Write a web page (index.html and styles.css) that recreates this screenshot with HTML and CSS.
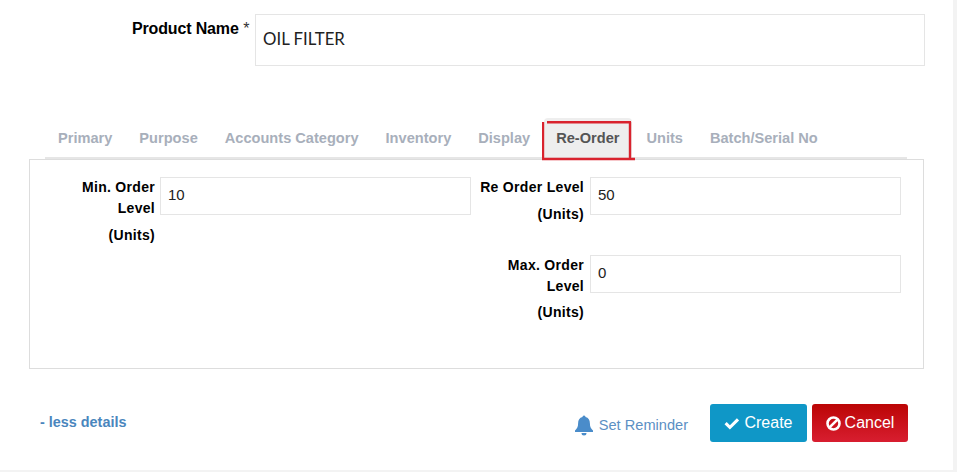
FILE: index.html
```html
<!DOCTYPE html>
<html lang="en">
<head>
<meta charset="utf-8">
<title>Product</title>
<link rel="stylesheet" href="styles.css">
</head>
<body>
<main class="card">
  <div class="name-row">
    <label class="name-label"><b>Product Name</b> <span class="req">*</span></label>
    <input class="name-input" type="text" value="OIL FILTER">
  </div>
  <nav class="tabs">
    <a class="tab">Primary</a>
    <a class="tab">Purpose</a>
    <a class="tab">Accounts Category</a>
    <a class="tab">Inventory</a>
    <a class="tab">Display</a>
    <a class="tab active">Re-Order
      <svg class="mark" width="94" height="40" viewBox="0 0 94 40" aria-hidden="true">
        <path d="M1 1V37M0 38H93M5 1.200H89M88 1V38" fill="none" stroke="#d9232e" stroke-width="2.400"/>
      </svg>
    </a>
    <a class="tab">Units</a>
    <a class="tab">Batch/Serial No</a>
  </nav>
  <section class="panel">
    <div class="col">
      <div class="field">
        <label class="field-label">Min. Order Level <span class="unit">(Units)</span></label>
        <input class="field-input" type="text" value="10">
      </div>
    </div>
    <div class="col">
      <div class="field">
        <label class="field-label">Re Order Level <span class="unit">(Units)</span></label>
        <input class="field-input" type="text" value="50">
      </div>
      <div class="field">
        <label class="field-label">Max. Order Level <span class="unit">(Units)</span></label>
        <input class="field-input" type="text" value="0">
      </div>
    </div>
  </section>
  <footer class="foot">
    <a class="less">- less details</a>
    <div class="actions">
      <a class="reminder">
        <svg class="bell" width="20" height="21" viewBox="0 0 20 21" aria-hidden="true">
          <path d="M10 0.500a1.500 1.500 0 0 1 1.500 1.600c3 .7 4.400 3.100 4.400 6.200 0 3.600 1 5.300 3.100 7.200v1.500H1v-1.500c2.100-1.900 3.100-3.600 3.100-7.200 0-3.100 1.400-5.500 4.400-6.200A1.500 1.500 0 0 1 10 .5zM7.500 18h5a2.500 2.500 0 0 1-5 0z" fill="#4a8cca"/>
        </svg>
        Set Reminder
      </a>
      <button class="btn create" type="button">
        <svg width="16" height="13" viewBox="0 0 16 13" aria-hidden="true">
          <path d="M0.500 7.200L2.700 5l3.200 3.200L12.900 1.200l2.200 2.200L5.900 12.600z" fill="#fff"/>
        </svg>
        Create
      </button>
      <button class="btn cancel" type="button">
        <svg width="15" height="15" viewBox="0 0 15 15" aria-hidden="true">
          <circle cx="7.500" cy="7.500" r="6" fill="none" stroke="#fff" stroke-width="2.600"/>
          <path d="M3.300 11.700L11.700 3.300" stroke="#fff" stroke-width="2.600"/>
        </svg>
        Cancel
      </button>
    </div>
  </footer>
</main>
</body>
</html>
```

FILE: styles.css
```css
* { box-sizing: border-box; }
html, body { margin: 0; height: 100%; }
body {
  background: #f3f3f3;
  overflow: hidden;
  font-family: "Liberation Sans", Arial, sans-serif;
  font-size: 14px;
  color: #000;
}
.card {
  width: 953px;
  height: 470px;
  background: #fff;
  padding-top: 14px;
}
.name-row {
  display: flex;
  align-items: flex-start;
  padding-left: 132px;
}
.name-label {
  width: 123px;
  padding-top: 6px;
  line-height: 18px;
  font-size: 16px;
  white-space: nowrap;
}
.name-label b { letter-spacing: -.15px; }
.req { color: #333; font-size: 16px; }
.name-input {
  width: 670px;
  height: 52px;
  border: 1px solid #e5e5e5;
  padding: 0 7px 3px;
  font: 16.800px Lato, sans-serif;
  color: #222;
  outline: 0;
}
.tabs {
  display: flex;
  width: 862px;
  height: 41px;
  margin: 52px 0 0 45px;
  border-bottom: 2px solid #e6e6e6;
}
.tab {
  position: relative;
  height: 39px;
  padding: 0 13px;
  margin-right: 1px;
  font: 700 14.600px/40px "Liberation Sans", Arial, sans-serif;
  color: #a8afbb;
  white-space: nowrap;
}
.tab.active {
  background: #eee;
  color: #555;
  border-radius: 4px 4px 0 0;
  padding: 0 13px 0 12px;
}
.mark {
  position: absolute;
  left: -2px;
  top: 3px;
}
.panel {
  display: flex;
  width: 895px;
  height: 210px;
  margin: 0 0 0 29px;
  border: 1px solid #ddd;
  padding-top: 17px;
}
.col { width: 430px; }
.col + .col { width: 441px; }
.field {
  display: flex;
  align-items: flex-start;
  justify-content: flex-end;
  margin-bottom: 30px;
}
.col:first-child .field { justify-content: flex-start; }
.field-label {
  width: 106px;
  margin-right: 5px;
  text-align: right;
  font-weight: 700;
  letter-spacing: .3px;
  line-height: 21px;
  flex: none;
}
.col:first-child .field-label { margin-left: 19px; }
.col + .col .field-label { margin-right: 6px; }
.unit {
  display: block;
  margin-top: 5.500px;
}
.field-input {
  width: 311px;
  height: 38px;
  border: 1px solid #e5e5e5;
  padding: 0 7px 3px;
  font: 15px "Liberation Sans", Arial, sans-serif;
  color: #222;
  outline: 0;
  flex: none;
}
.foot {
  display: flex;
  align-items: flex-start;
  justify-content: space-between;
  width: 908px;
  padding: 35px 0 0 40px;
}
.less {
  margin-top: 9px;
  font: 700 14.400px/18px "Liberation Sans", Arial, sans-serif;
  color: #4a86bd;
}
.actions {
  display: flex;
  align-items: flex-start;
}
.reminder {
  display: flex;
  align-items: center;
  gap: 5px;
  margin: 9px 22px 0 0;
  font-size: 14.600px;
  line-height: 24px;
  color: #5b8fc4;
}
.btn {
  display: inline-flex;
  align-items: center;
  justify-content: center;
  gap: 4px;
  width: 97px;
  height: 38px;
  border: 0;
  border-radius: 3px;
  padding: 0;
  font: 16px "Liberation Sans", Arial, sans-serif;
  color: #fff;
}
.create { background: #0f97c7; margin-right: 5px; }
.cancel { width: 96px; background: linear-gradient(#bb0505, #d81e30); }
```
